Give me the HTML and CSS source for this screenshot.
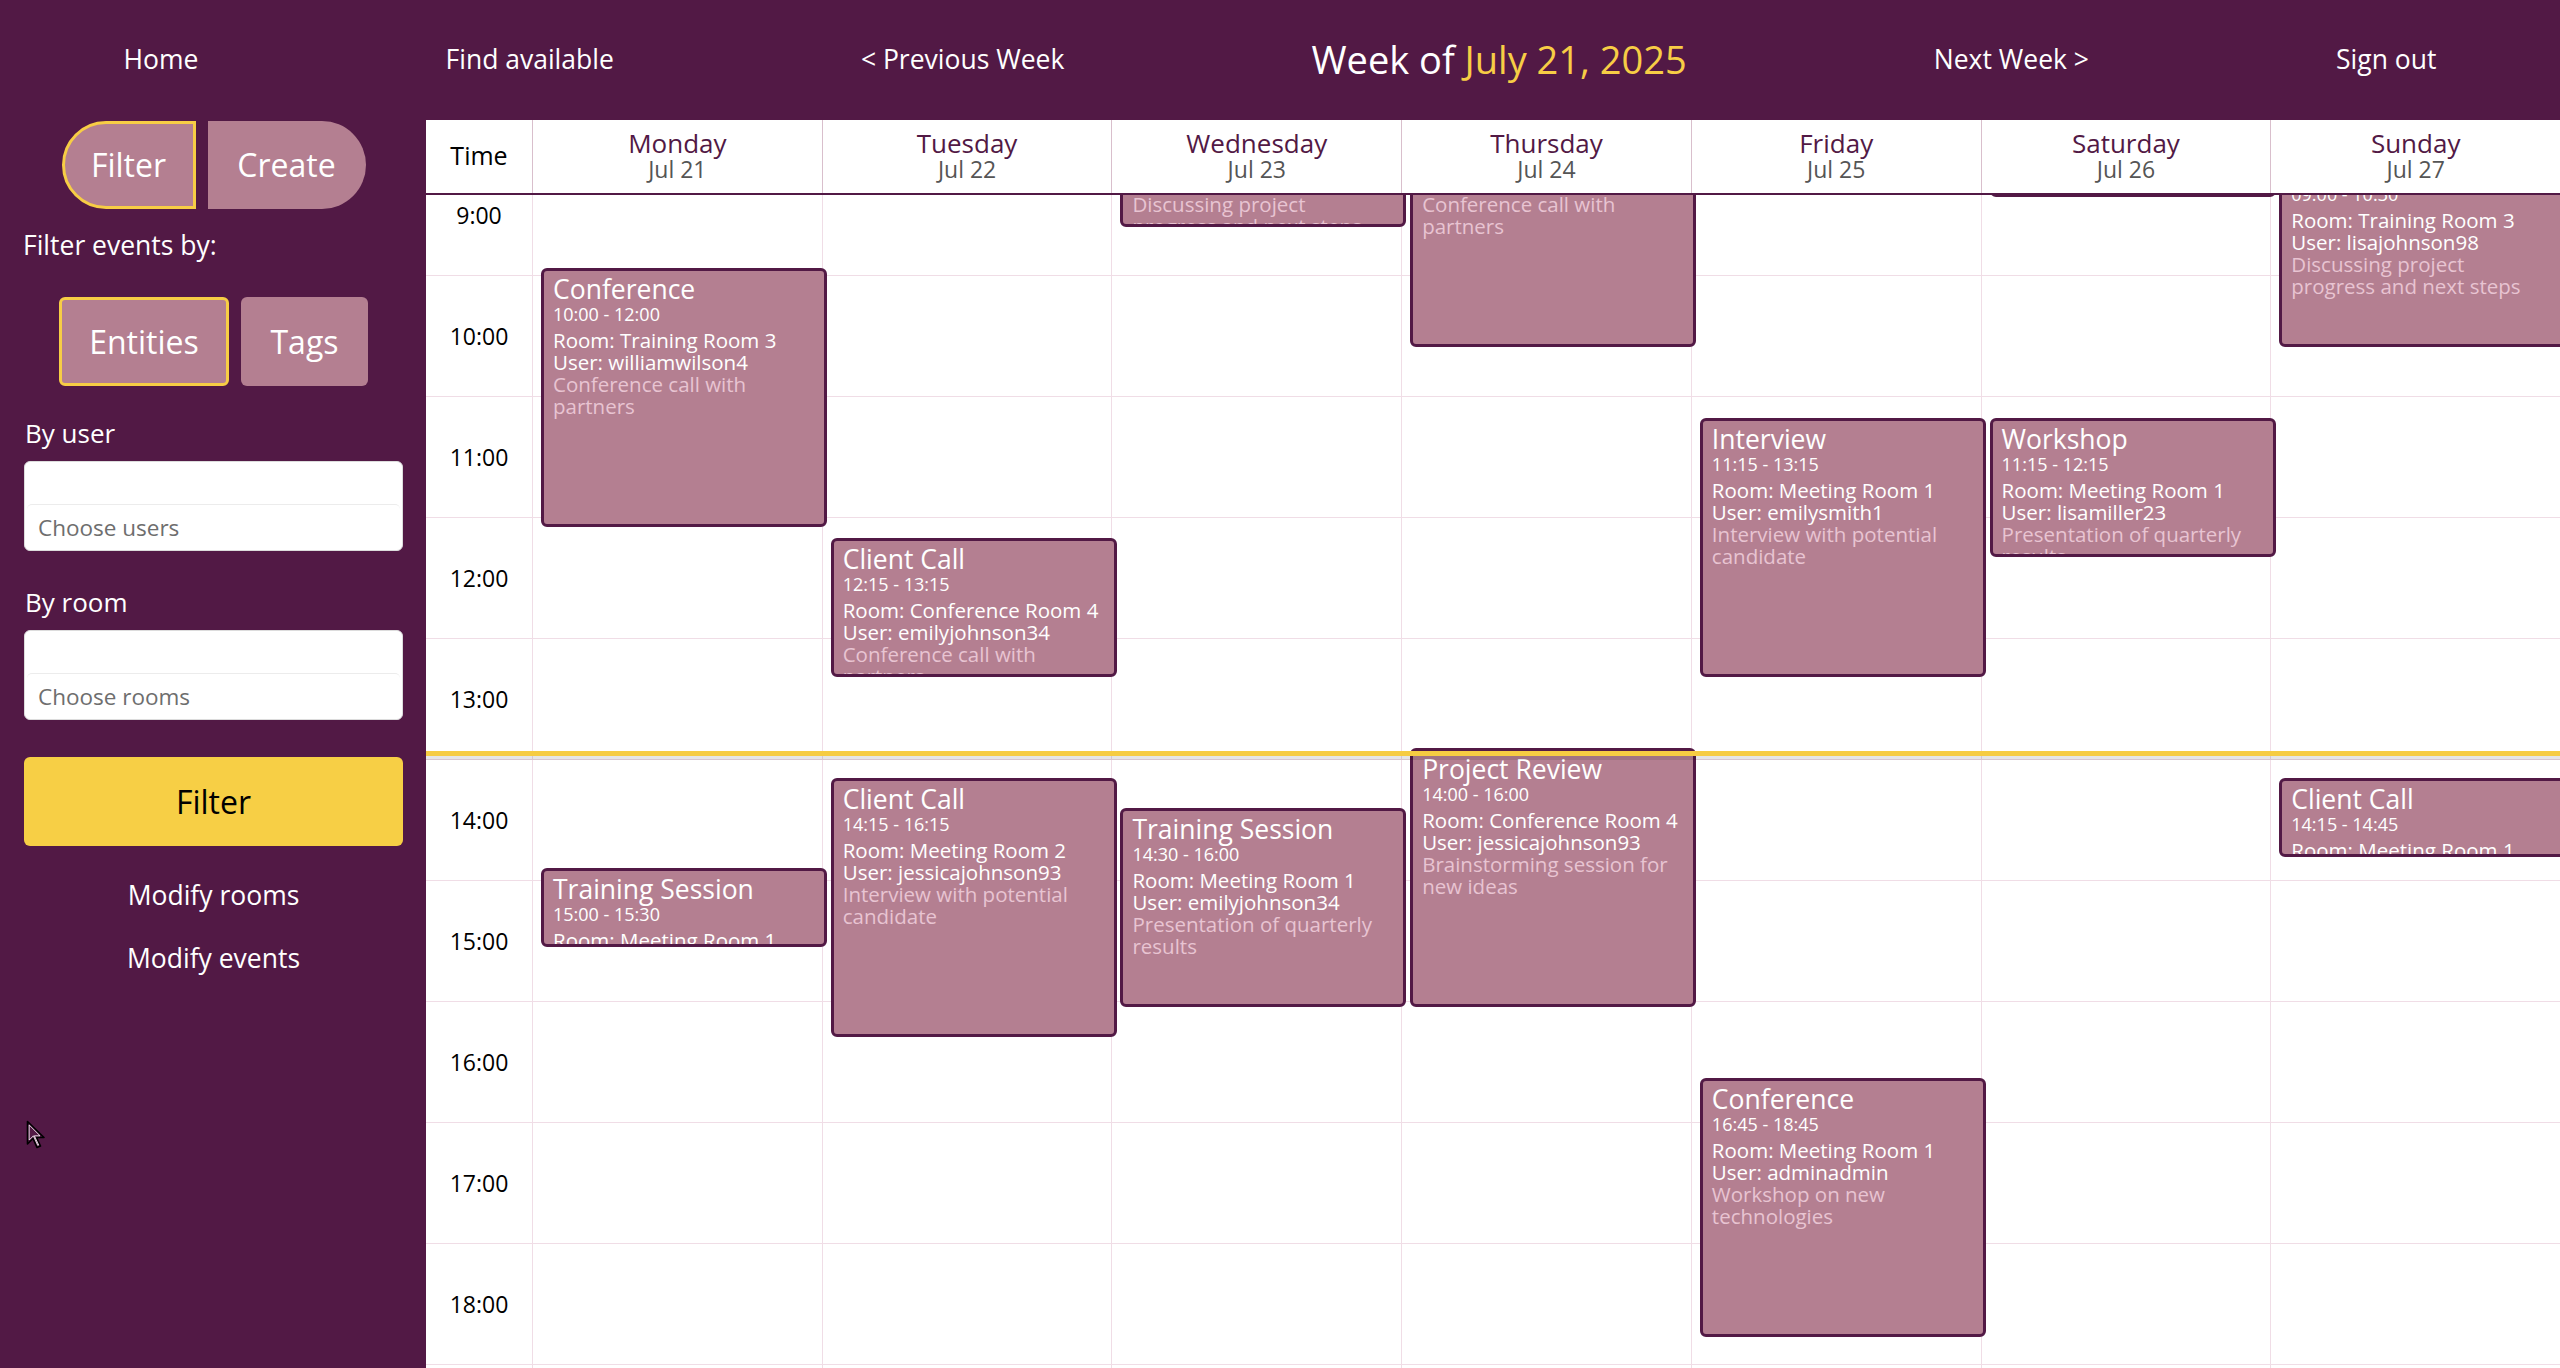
FILE: index.html
```html
<!DOCTYPE html>
<html lang="en">
<head>
<meta charset="utf-8">
<title>Week of July 21, 2025</title>
<link rel="stylesheet" href="styles.css">
</head>
<body>
<header class="topbar">
  <a class="nav-link" href="#">Home</a>
  <a class="nav-link" href="#">Find available</a>
  <a class="nav-link" href="#">&lt; Previous Week</a>
  <h1 class="week-title">Week of <span class="date">July 21, 2025</span></h1>
  <a class="nav-link" href="#">Next Week &gt;</a>
  <a class="nav-link" href="#">Sign out</a>
</header>
<div class="main">
  <aside class="sidebar">
    <div class="tabs">
      <div class="tab tab-filter">Filter</div>
      <div class="tab tab-create">Create</div>
    </div>
    <div class="section-title">Filter events by:</div>
    <div class="modes">
      <div class="mode mode-entities">Entities</div>
      <div class="mode mode-tags">Tags</div>
    </div>
    <div class="field-label">By user</div>
    <div class="multiselect">
      <div class="ms-tags"></div>
      <div class="ms-input">Choose users</div>
    </div>
    <div class="field-label field-label-room">By room</div>
    <div class="multiselect">
      <div class="ms-tags"></div>
      <div class="ms-input">Choose rooms</div>
    </div>
    <div class="filter-btn">Filter</div>
    <div class="side-link side-link-rooms">Modify rooms</div>
    <div class="side-link side-link-events">Modify events</div>
    <svg class="cursor" width="20" height="30" viewBox="0 0 20 30"><path d="M1.5 1.5 L1.5 24 L7 18.5 L11 27.5 L14.5 26 L10.5 17.5 L18 17.5 Z" fill="#521945" stroke="#000" stroke-width="1.6" stroke-linejoin="round"/><path d="M3.2 5 L3.2 20 L7.4 15.8 L11.8 25.4 L12.6 25 L8.3 15.8 L14 15.8 Z" fill="none" stroke="#fff" stroke-width="0.8"/></svg>
  </aside>
  <section class="calendar">
    <div class="cal-head">
      <div class="head-cell head-time">Time</div>
      <div class="head-cell"><div class="day-name">Monday</div><div class="day-date">Jul 21</div></div>
      <div class="head-cell"><div class="day-name">Tuesday</div><div class="day-date">Jul 22</div></div>
      <div class="head-cell"><div class="day-name">Wednesday</div><div class="day-date">Jul 23</div></div>
      <div class="head-cell"><div class="day-name">Thursday</div><div class="day-date">Jul 24</div></div>
      <div class="head-cell"><div class="day-name">Friday</div><div class="day-date">Jul 25</div></div>
      <div class="head-cell"><div class="day-name">Saturday</div><div class="day-date">Jul 26</div></div>
      <div class="head-cell"><div class="day-name">Sunday</div><div class="day-date">Jul 27</div></div>
    </div>
    <div class="cal-viewport">
      <div class="cal-body">
        <div class="now-line"></div>
        <div class="time-col">
          <div class="slot time-slot"></div>
          <div class="slot time-slot">9:00</div>
          <div class="slot time-slot">10:00</div>
          <div class="slot time-slot">11:00</div>
          <div class="slot time-slot">12:00</div>
          <div class="slot time-slot">13:00</div>
          <div class="slot time-slot">14:00</div>
          <div class="slot time-slot">15:00</div>
          <div class="slot time-slot">16:00</div>
          <div class="slot time-slot">17:00</div>
          <div class="slot time-slot">18:00</div>
          <div class="slot time-slot"></div>
        </div>
        <!-- Monday -->
        <div class="day-col">
          <div class="slot"></div><div class="slot"></div><div class="slot"></div><div class="slot"></div><div class="slot"></div><div class="slot"></div><div class="slot"></div><div class="slot"></div><div class="slot"></div><div class="slot"></div><div class="slot"></div><div class="slot"></div>
          <div class="event" style="top:234px;height:259px">
            <div class="ev-title">Conference</div>
            <div class="ev-time">10:00 - 12:00</div>
            <div class="ev-line">Room: Training Room 3</div>
            <div class="ev-line">User: williamwilson4</div>
            <div class="ev-desc">Conference call with partners</div>
          </div>
          <div class="event" style="top:834px;height:79px">
            <div class="ev-title">Training Session</div>
            <div class="ev-time">15:00 - 15:30</div>
            <div class="ev-line">Room: Meeting Room 1</div>
            <div class="ev-line">User: davidbrown12</div>
            <div class="ev-desc">Onboarding for new employees</div>
          </div>
        </div>
        <!-- Tuesday -->
        <div class="day-col">
          <div class="slot"></div><div class="slot"></div><div class="slot"></div><div class="slot"></div><div class="slot"></div><div class="slot"></div><div class="slot"></div><div class="slot"></div><div class="slot"></div><div class="slot"></div><div class="slot"></div><div class="slot"></div>
          <div class="event" style="top:504px;height:139px">
            <div class="ev-title">Client Call</div>
            <div class="ev-time">12:15 - 13:15</div>
            <div class="ev-line">Room: Conference Room 4</div>
            <div class="ev-line">User: emilyjohnson34</div>
            <div class="ev-desc">Conference call with partners</div>
          </div>
          <div class="event" style="top:744px;height:259px">
            <div class="ev-title">Client Call</div>
            <div class="ev-time">14:15 - 16:15</div>
            <div class="ev-line">Room: Meeting Room 2</div>
            <div class="ev-line">User: jessicajohnson93</div>
            <div class="ev-desc">Interview with potential candidate</div>
          </div>
        </div>
        <!-- Wednesday -->
        <div class="day-col">
          <div class="slot"></div><div class="slot"></div><div class="slot"></div><div class="slot"></div><div class="slot"></div><div class="slot"></div><div class="slot"></div><div class="slot"></div><div class="slot"></div><div class="slot"></div><div class="slot"></div><div class="slot"></div>
          <div class="event" style="top:54px;height:139px">
            <div class="ev-title">Team Meeting</div>
            <div class="ev-time">08:30 - 09:30</div>
            <div class="ev-line">Room: Conference Room 4</div>
            <div class="ev-line">User: michaelbrown7</div>
            <div class="ev-desc">Discussing project progress and next steps</div>
          </div>
          <div class="event" style="top:774px;height:199px">
            <div class="ev-title">Training Session</div>
            <div class="ev-time">14:30 - 16:00</div>
            <div class="ev-line">Room: Meeting Room 1</div>
            <div class="ev-line">User: emilyjohnson34</div>
            <div class="ev-desc">Presentation of quarterly results</div>
          </div>
        </div>
        <!-- Thursday -->
        <div class="day-col">
          <div class="slot"></div><div class="slot"></div><div class="slot"></div><div class="slot"></div><div class="slot"></div><div class="slot"></div><div class="slot"></div><div class="slot"></div><div class="slot"></div><div class="slot"></div><div class="slot"></div><div class="slot"></div>
          <div class="event" style="top:54px;height:259px">
            <div class="ev-title">Conference</div>
            <div class="ev-time">08:30 - 10:30</div>
            <div class="ev-line">Room: Training Room 3</div>
            <div class="ev-line">User: sarahdavis21</div>
            <div class="ev-desc">Conference call with partners</div>
          </div>
          <div class="event" style="top:714px;height:259px">
            <div class="ev-title">Project Review</div>
            <div class="ev-time">14:00 - 16:00</div>
            <div class="ev-line">Room: Conference Room 4</div>
            <div class="ev-line">User: jessicajohnson93</div>
            <div class="ev-desc">Brainstorming session for new ideas</div>
          </div>
        </div>
        <!-- Friday -->
        <div class="day-col">
          <div class="slot"></div><div class="slot"></div><div class="slot"></div><div class="slot"></div><div class="slot"></div><div class="slot"></div><div class="slot"></div><div class="slot"></div><div class="slot"></div><div class="slot"></div><div class="slot"></div><div class="slot"></div>
          <div class="event" style="top:384px;height:259px">
            <div class="ev-title">Interview</div>
            <div class="ev-time">11:15 - 13:15</div>
            <div class="ev-line">Room: Meeting Room 1</div>
            <div class="ev-line">User: emilysmith1</div>
            <div class="ev-desc">Interview with potential candidate</div>
          </div>
          <div class="event" style="top:1044px;height:259px">
            <div class="ev-title">Conference</div>
            <div class="ev-time">16:45 - 18:45</div>
            <div class="ev-line">Room: Meeting Room 1</div>
            <div class="ev-line">User: adminadmin</div>
            <div class="ev-desc">Workshop on new technologies</div>
          </div>
        </div>
        <!-- Saturday -->
        <div class="day-col">
          <div class="slot"></div><div class="slot"></div><div class="slot"></div><div class="slot"></div><div class="slot"></div><div class="slot"></div><div class="slot"></div><div class="slot"></div><div class="slot"></div><div class="slot"></div><div class="slot"></div><div class="slot"></div>
          <div class="event" style="top:-6px;height:169px">
            <div class="ev-title">Team Meeting</div>
            <div class="ev-time">08:00 - 09:15</div>
            <div class="ev-line">Room: Meeting Room 2</div>
            <div class="ev-line">User: johnsmith5</div>
            <div class="ev-desc">Weekly team sync</div>
          </div>
          <div class="event" style="top:384px;height:139px">
            <div class="ev-title">Workshop</div>
            <div class="ev-time">11:15 - 12:15</div>
            <div class="ev-line">Room: Meeting Room 1</div>
            <div class="ev-line">User: lisamiller23</div>
            <div class="ev-desc">Presentation of quarterly results</div>
          </div>
        </div>
        <!-- Sunday -->
        <div class="day-col">
          <div class="slot"></div><div class="slot"></div><div class="slot"></div><div class="slot"></div><div class="slot"></div><div class="slot"></div><div class="slot"></div><div class="slot"></div><div class="slot"></div><div class="slot"></div><div class="slot"></div><div class="slot"></div>
          <div class="event" style="top:114px;height:199px">
            <div class="ev-title">Team Meeting</div>
            <div class="ev-time">09:00 - 10:30</div>
            <div class="ev-line">Room: Training Room 3</div>
            <div class="ev-line">User: lisajohnson98</div>
            <div class="ev-desc">Discussing project progress and next steps</div>
          </div>
          <div class="event" style="top:744px;height:79px">
            <div class="ev-title">Client Call</div>
            <div class="ev-time">14:15 - 14:45</div>
            <div class="ev-line">Room: Meeting Room 1</div>
            <div class="ev-line">User: robertwilson2</div>
            <div class="ev-desc">Follow-up call</div>
          </div>
        </div>
      </div>
    </div>
  </section>
</div>
</body>
</html>
```

FILE: styles.css
```css
* { box-sizing: border-box; }

html, body {
  margin: 0;
  padding: 0;
}

body {
  width: 2560px;
  height: 1368px;
  overflow: hidden;
  background: #521945;
  font-family: "Open Sans", "Noto Sans", sans-serif;
}

/* ---------- top bar ---------- */
.topbar {
  height: 120px;
  padding-bottom: 2px;
  display: flex;
  justify-content: space-around;
  align-items: center;
  color: #fff;
}

.nav-link {
  font-size: 26.5px;
  color: #fff;
  text-decoration: none;
}

.week-title {
  margin: 0;
  font-size: 38px;
  font-weight: 400;
  color: #fff;
}

.week-title .date { color: #f7cd45; }

/* ---------- layout ---------- */
.main {
  display: flex;
  height: 1248px;
}

/* ---------- sidebar ---------- */
.sidebar {
  width: 426px;
  flex: none;
  padding: 1px 23px 0 24px;
  color: #fff;
  position: relative;
}

.tabs {
  display: flex;
  justify-content: center;
  gap: 12px;
}

.tab {
  height: 88px;
  background: #b47f91;
  color: #fff;
  font-size: 32px;
  display: flex;
  align-items: center;
  justify-content: center;
  padding-bottom: 2px;
}

.tab-filter {
  width: 134px;
  border: 3px solid #f7cd45;
  border-radius: 44px 0 0 44px;
}

.tab-create {
  width: 158px;
  border-radius: 0 44px 44px 0;
}

.section-title {
  font-size: 26.5px;
  line-height: 30px;
  margin: 21px 0 0 -1px;
}

.modes {
  display: flex;
  justify-content: center;
  gap: 12px;
  margin-top: 37px;
}

.mode {
  height: 89px;
  background: #b47f91;
  border-radius: 6px;
  font-size: 32px;
  display: flex;
  align-items: center;
  justify-content: center;
}

.mode-entities {
  width: 170px;
  border: 3px solid #f7cd45;
}

.mode-tags { width: 127px; }

.field-label {
  font-size: 26px;
  line-height: 30px;
  margin-top: 32px;
  padding-left: 1px;
}

.field-label-room { margin-top: 36px; }

.multiselect {
  margin-top: 13px;
  height: 90px;
  background: #fff;
  border: 1px solid #dcdcdc;
  border-radius: 6px;
  display: flex;
  flex-direction: column;
  padding: 0 2px;
}

.ms-tags { height: 42px; flex: none; }

.ms-input {
  flex: 1;
  border-top: 1px solid #ececec;
  border-radius: 5px;
  font-size: 22.5px;
  color: #6e6e6e;
  display: flex;
  align-items: center;
  padding-left: 11px;
}

.filter-btn {
  margin-top: 37px;
  height: 89px;
  background: #f7cf45;
  border-radius: 6px;
  font-size: 32px;
  color: #000;
  display: flex;
  align-items: center;
  justify-content: center;
}

.side-link {
  text-align: center;
  font-size: 26.5px;
  line-height: 30px;
}

.side-link-rooms { margin-top: 34px; }
.side-link-events { margin-top: 33px; }

.cursor {
  position: absolute;
  left: 26px;
  top: 1000px;
}

/* ---------- calendar ---------- */
.calendar {
  flex: 1;
  min-width: 0;
  background: #fff;
  display: flex;
  flex-direction: column;
  overflow: hidden;
}

.cal-head {
  flex: none;
  display: grid;
  grid-template-columns: 106px repeat(7, 1fr);
  height: 75px;
  border-bottom: 2px solid #521945;
  background: #fff;
}

.head-cell {
  display: flex;
  flex-direction: column;
  align-items: center;
  justify-content: center;
  padding-bottom: 4px;
  border-left: 1px solid #d9bfcc;
}

.head-time {
  border-left: none;
  font-size: 25px;
  color: #000;
}

.day-name {
  font-size: 26px;
  line-height: 28px;
  color: #521945;
}

.day-date {
  font-size: 23px;
  line-height: 24px;
  color: #555;
}

.cal-viewport {
  flex: 1;
  overflow: hidden;
  position: relative;
}

.cal-body {
  display: grid;
  grid-template-columns: 106px repeat(7, 1fr);
  margin-top: -161px;
  position: relative;
}

.time-col,
.day-col {
  display: flex;
  flex-direction: column;
}

.day-col {
  position: relative;
  border-left: 1px solid #f0dde6;
}

.slot {
  flex: none;
  height: 121px;
  border-bottom: 1px solid #f0dde6;
}

.time-slot {
  display: flex;
  align-items: center;
  justify-content: center;
  font-size: 23px;
  color: #000;
}

.now-line {
  position: absolute;
  left: 0;
  right: 0;
  top: 717px;
  height: 5px;
  background: #f6cc42;
  box-shadow: 0 4px 0 rgba(0, 0, 0, 0.1);
  z-index: 3;
}

.event {
  position: absolute;
  left: 8px;
  width: 286px;
  background: #b47f91;
  border: 3px solid #521945;
  border-radius: 6px;
  padding: 6.5px 9px;
  overflow: hidden;
  color: #fff;
  z-index: 2;
}

.ev-title {
  font-size: 26.5px;
  line-height: 22px;
  margin-bottom: 3px;
  white-space: nowrap;
}

.ev-time {
  font-size: 18px;
  line-height: 22px;
  margin-bottom: 4px;
}

.ev-line {
  font-size: 20.5px;
  line-height: 22px;
  white-space: nowrap;
}

.ev-desc {
  font-size: 20.5px;
  line-height: 22px;
  color: #e8c4d2;
}
```
